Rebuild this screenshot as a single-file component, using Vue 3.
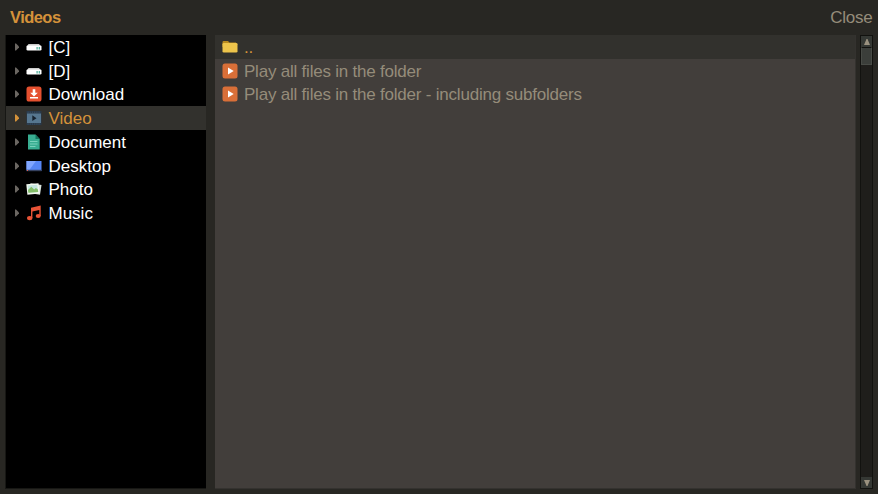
<script setup>
import { ref } from 'vue'

const selected = ref('video')
const places = [
  { id: 'c', label: '[C]', icon: 'drive' },
  { id: 'd', label: '[D]', icon: 'drive' },
  { id: 'download', label: 'Download', icon: 'download' },
  { id: 'video', label: 'Video', icon: 'video' },
  { id: 'document', label: 'Document', icon: 'document' },
  { id: 'desktop', label: 'Desktop', icon: 'desktop' },
  { id: 'photo', label: 'Photo', icon: 'photo' },
  { id: 'music', label: 'Music', icon: 'music' },
]
const entries = [
  { label: '..', icon: 'folder', current: true },
  { label: 'Play all files in the folder', icon: 'play' },
  { label: 'Play all files in the folder - including subfolders', icon: 'play' },
]
</script>

<template>
  <div class="browser">
    <header class="header">
      <h1 class="title">Videos</h1>
      <button class="close">Close</button>
    </header>
    <main class="content">
      <nav class="tree">
        <div
          v-for="p in places"
          :key="p.id"
          class="row"
          :class="{ active: p.id === selected }"
          @click="selected = p.id"
        >
          <svg class="arrow" viewBox="0 0 4 8"><path d="M0 0.500H1L4 3.500V4.500L1 7.500H0Z" /></svg>
          <svg class="icon" viewBox="0 0 16 16">
            <g v-if="p.icon === 'drive'">
              <path d="M2.500 5H13L15.500 8H.5Z" fill="#cbcbcb" />
              <rect x=".5" y="6.500" width="15" height="5" rx="1.300" fill="#fff" />
              <path d="M10.500 8h1.200v2.500h-1.200zM12.700 8h1.200v2.500h-1.200z" fill="#45a995" />
            </g>
            <g v-else-if="p.icon === 'download'">
              <rect x=".5" y=".5" width="15" height="15" rx="2.600" fill="#e5502f" />
              <path d="M6.700 3.200h2.600v3.600h2.500L8 10.400 4.200 6.800h2.500zM4 11h8v1.500H4z" fill="#fff" />
            </g>
            <g v-else-if="p.icon === 'video'">
              <rect x=".5" y="1" width="15" height="14" fill="#293848" />
              <rect x="1" y="3.500" width="14" height="9.500" fill="#56768f" />
              <path d="M1.500 2.200h13M1.500 14h13" stroke="#3c5267" stroke-width="1" stroke-dasharray="1.200 1" />
              <path d="M6.300 5.300L10.500 8.200 6.300 11.100Z" fill="#17222e" />
            </g>
            <g v-else-if="p.icon === 'document'">
              <path d="M2 .5h7.500L13.700 5v10.500H2z" fill="#38ad91" />
              <path d="M9.500 .5V5h4.200z" fill="#16745e" />
              <path d="M4 7.500h7.500M4 10h7.500M4 12.500h5.500" stroke="#79d2bb" stroke-width="1" />
            </g>
            <g v-else-if="p.icon === 'desktop'">
              <rect x=".5" y="3" width="15" height="10" fill="#5686f5" />
              <path d="M.5 3H10L3.500 11.800H.5z" fill="#80a6ff" />
              <rect x=".5" y="11.800" width="15" height="1.400" fill="#35415f" />
              <path d="M1 12.100h1v.8H1z" fill="#e35f45" />
            </g>
            <g v-else-if="p.icon === 'photo'">
              <path d="M4.500 2.300L15.500 4 14 13.700 3 12z" fill="#d8e3dc" />
              <path d="M.3 3.200L12.500 2.200 13.700 12.500 1.400 13.700z" fill="#f3f8ef" />
              <path d="M1.700 4.500L11.300 3.700 12.200 10.900 2.400 11.800z" fill="#c4e6df" />
              <path d="M2 8.900L5.300 5.700 8.200 8.600 9.900 7 11.900 8.500 12.200 10.900 2.400 11.800z" fill="#83bd68" />
            </g>
            <g v-else fill="#e85336">
              <path d="M5 2.800L14.700.5V11H13.300V5L6.400 6.600V13H5z" />
              <ellipse cx="3.700" cy="13.100" rx="2.700" ry="2.200" />
              <ellipse cx="12.200" cy="11" rx="2.500" ry="2.100" />
            </g>
          </svg>
          <span class="label">{{ p.label }}</span>
        </div>
      </nav>
      <section class="files">
        <div v-for="e in entries" :key="e.label" class="row file" :class="{ active: e.current }">
          <svg class="icon" viewBox="0 0 16 16">
            <g v-if="e.icon === 'folder'">
              <path d="M.5 3.200Q.5 2 1.700 2H6L7.500 3.600H14V8H.5z" fill="#b98b20" />
              <rect x=".5" y="3.900" width="15" height="9.600" rx="1.300" fill="#edc44b" />
            </g>
            <g v-else>
              <rect x=".5" y=".5" width="15" height="15" rx="2.500" fill="#d96f38" />
              <path d="M6 4.500L11.700 8 6 11.500Z" fill="#fff" />
            </g>
          </svg>
          <span class="label">{{ e.label }}</span>
        </div>
      </section>
      <div class="scrollbar">
        <button class="step" aria-label="Scroll up">
          <svg viewBox="0 0 6 6"><path d="M2.500 0h1L6 6H0z" /></svg>
        </button>
        <div class="track"><div class="thumb"></div></div>
        <button class="step" aria-label="Scroll down">
          <svg viewBox="0 0 6 6"><path d="M0 0h6L3.500 6h-1z" /></svg>
        </button>
      </div>
    </main>
  </div>
</template>

<style>
body {
  margin: 0;
  background: #282723;
}
</style>

<style scoped>
.browser {
  box-sizing: border-box;
  height: 100vh;
  display: flex;
  flex-direction: column;
  padding: 0 5px 5px;
  overflow: hidden;
  background: #282723;
  font: 17px/22px "Liberation Sans", Arial, sans-serif;
  color: #958c7a;
}
.header {
  height: 35px;
  display: flex;
  justify-content: space-between;
  align-items: center;
  padding: 0 0.500px 0 5px;
}
.title {
  margin: 0;
  padding-bottom: 1px;
  font-size: 16.500px;
  letter-spacing: -0.550px;
  color: #d5923a;
}
button {
  border: 0;
  padding: 0;
  background: none;
  font: inherit;
  color: inherit;
}
.close {
  letter-spacing: -0.250px;
}
.content {
  flex: 1;
  min-height: 0;
  display: flex;
}
.tree {
  box-sizing: border-box;
  width: 201px;
  margin-right: 9px;
  border: solid #171714;
  border-width: 0 0 1px 1px;
  background: #000;
  color: #fff;
}
.row {
  height: 23.780px;
  display: flex;
  align-items: center;
  padding-left: 8.500px;
  white-space: nowrap;
}
.row.active {
  background: #32312d;
  color: #d5923a;
}
.arrow {
  width: 4px;
  height: 8px;
  margin-right: 7.500px;
  fill: #6b6762;
}
.active .arrow {
  fill: #d5923a;
}
.icon {
  width: 16px;
  height: 16px;
  margin-right: 6.500px;
  flex: none;
}
.label {
  padding-top: 2px;
}
.files {
  box-sizing: border-box;
  width: 641px;
  border: solid #34322f;
  border-width: 0 1px 1px 0;
  margin-right: 4px;
  background: #423e3b;
}
.file {
  padding-left: 6.500px;
}
.file .label {
  letter-spacing: -0.215px;
}
.scrollbar {
  box-sizing: border-box;
  width: 13px;
  display: flex;
  flex-direction: column;
  border: 1px solid #12120f;
  background: #1f1e1b;
}
.step {
  height: 11px;
  display: flex;
  align-items: center;
  justify-content: center;
  background: #353834;
}
.step svg {
  width: 6px;
  height: 6px;
  fill: #9a917f;
}
.track {
  flex: 1;
}
.thumb {
  box-sizing: border-box;
  height: 18px;
  border: 1px solid #484b46;
  border-top-color: #12120f;
  background: #3b3e3a;
}
</style>
